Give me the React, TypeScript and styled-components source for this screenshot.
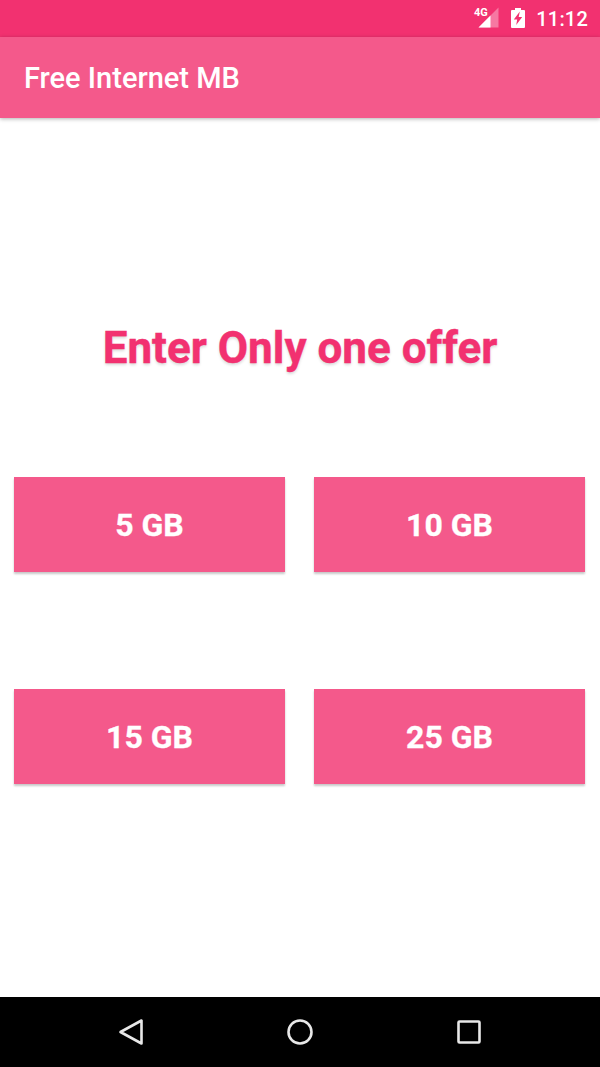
import styled, { createGlobalStyle } from 'styled-components';

const offers = ['5 GB', '10 GB', '15 GB', '25 GB'];

export default function App() {
	return (
		<>
			<GlobalStyle />
			<Screen>
				<StatusBar>
					<NetworkIcon viewBox='0 0 28 22' aria-hidden='true'>
						<path d='M25.500 1.500v20H5.500z' fill='#fff' fillOpacity='0.35' />
						<path d='M17.500 9.500v12H5.500z' fill='#fff' />
					</NetworkIcon>
					<NetworkLabel>4G</NetworkLabel>
					<BatteryIcon viewBox='0 0 14 20' aria-hidden='true'>
						<path
							fillRule='evenodd'
							d='M4 0h6v2h3a1 1 0 0 1 1 1v16a1 1 0 0 1-1 1H1a1 1 0 0 1-1-1V3a1 1 0 0 1 1-1h3zM8.800 3.500 2.800 11.500h3.400l-1 5.500 6-8H7.700z'
							fill='#fff'
						/>
					</BatteryIcon>
					<Clock>11:12</Clock>
				</StatusBar>
				<AppBar>Free Internet MB</AppBar>
				<Content>
					<Title>Enter Only one offer</Title>
					<OfferGrid>
						{offers.map((offer) => (
							<OfferButton key={offer}>{offer}</OfferButton>
						))}
					</OfferGrid>
				</Content>
				<NavBar>
					<NavIcon viewBox='0 0 28 28' aria-hidden='true'>
						<path d='M24.500 2.500v23L3.500 14z' />
					</NavIcon>
					<NavIcon viewBox='0 0 28 28' aria-hidden='true'>
						<circle cx='14' cy='14' r='11.500' />
					</NavIcon>
					<NavIcon viewBox='0 0 28 28' aria-hidden='true'>
						<rect x='3.500' y='3.500' width='21' height='21' rx='1' />
					</NavIcon>
				</NavBar>
			</Screen>
		</>
	);
}

const GlobalStyle = createGlobalStyle`
	html, body {
		margin: 0;
		padding: 0;
		background: #fff;
	}

	* {
		box-sizing: border-box;
	}
`;

const Screen = styled.div`
	display: flex;
	flex-direction: column;
	width: 600px;
	height: 1067px;
	overflow: hidden;
	font-family: Roboto, 'Liberation Sans', sans-serif;
`;

const StatusBar = styled.div`
	position: relative;
	display: flex;
	align-items: center;
	justify-content: flex-end;
	flex: 0 0 37px;
	padding-right: 12px;
	background: #f23170;
	color: #fff;
`;

const NetworkIcon = styled.svg`
	width: 28px;
	height: 22px;
	margin-right: 10px;
	margin-bottom: 3px;
`;

const NetworkLabel = styled.span`
	position: absolute;
	top: 6px;
	left: 474px;
	font-size: 11px;
	line-height: 13px;
	font-weight: 700;
`;

const BatteryIcon = styled.svg`
	width: 14px;
	height: 20px;
	margin-right: 11px;
	margin-bottom: 1px;
`;

const Clock = styled.span`
	font-size: 20px;
	font-weight: 500;
	letter-spacing: 0.2px;
	line-height: 24px;
	padding-top: 1px;
`;

const AppBar = styled.header`
	position: relative;
	z-index: 1;
	display: flex;
	align-items: center;
	flex: 0 0 81px;
	padding: 1px 0 0 24px;
	background: #f4598b;
	color: #fff;
	font-size: 29px;
	font-weight: 500;
	box-shadow: 0 1px 4px rgba(0, 0, 0, 0.3);
`;

const Content = styled.main`
	flex: 1;
	display: flex;
	flex-direction: column;
	padding: 204px 0 0 14px;
	background: #fff;
`;

const Title = styled.h1`
	margin: 0 14px 102px 0;
	height: 53px;
	font-size: 44px;
	line-height: 53px;
	font-weight: 700;
	text-align: center;
	color: #f23170;
	-webkit-text-stroke: 0.4px #f23170;
	text-shadow: 0 2px 3px rgba(0, 0, 0, 0.15);
`;

const OfferGrid = styled.div`
	display: grid;
	grid-template-columns: 271px 271px;
	grid-auto-rows: 95px;
	column-gap: 29px;
	row-gap: 117px;
`;

const OfferButton = styled.button`
	border: 0;
	border-radius: 0;
	padding: 0;
	background: #f4598b;
	color: #fff;
	font-family: inherit;
	font-size: 32px;
	font-weight: 700;
	-webkit-text-stroke: 0.3px #fff;
	box-shadow: 0 2px 2px rgba(0, 0, 0, 0.22);
`;

const NavBar = styled.nav`
	display: flex;
	align-items: center;
	justify-content: space-between;
	flex: 0 0 70px;
	padding: 0 117px 0 117px;
	background: #000;
`;

const NavIcon = styled.svg`
	width: 28px;
	height: 28px;
	fill: none;
	stroke: #e8e8e8;
	stroke-width: 2.6;
	stroke-linejoin: round;
`;
